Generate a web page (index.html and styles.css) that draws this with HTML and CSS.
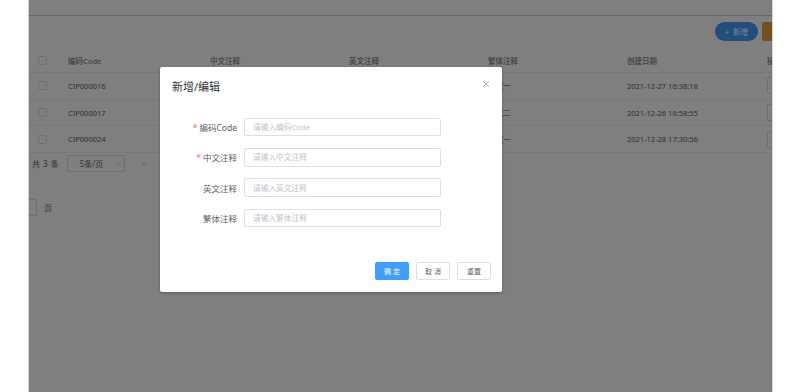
FILE: index.html
```html
<!DOCTYPE html>
<html lang="zh-CN">
<head>
<meta charset="utf-8">
<title>编码管理</title>
<link rel="stylesheet" href="styles.css">
</head>
<body>
<div class="side"></div>
<div class="frame">
  <div class="page">
    <div class="topbar"></div>
    <div class="toolbar">
      <button class="btn-add">+ 新增</button>
      <button class="btn-export">导出</button>
    </div>
    <div class="table">
      <div class="tr th">
        <div class="td c0"><span class="cb"></span></div>
        <div class="td c1">编码Code</div>
        <div class="td c2">中文注释</div>
        <div class="td c2">英文注释</div>
        <div class="td c2">繁体注释</div>
        <div class="td c5">创建日期</div>
        <div class="td c6">操作</div>
      </div>
      <div class="tr">
        <div class="td c0"><span class="cb"></span></div>
        <div class="td c1">CIP000016</div>
        <div class="td c2"></div>
        <div class="td c2"></div>
        <div class="td c2">測試一</div>
        <div class="td c5">2021-12-27 16:38:18</div>
        <div class="td c6"><span class="op">编辑</span></div>
      </div>
      <div class="tr">
        <div class="td c0"><span class="cb"></span></div>
        <div class="td c1">CIP000017</div>
        <div class="td c2"></div>
        <div class="td c2"></div>
        <div class="td c2">測試二</div>
        <div class="td c5">2021-12-26 18:58:55</div>
        <div class="td c6"><span class="op">编辑</span></div>
      </div>
      <div class="tr">
        <div class="td c0"><span class="cb"></span></div>
        <div class="td c1">CIP000024</div>
        <div class="td c2"></div>
        <div class="td c2"></div>
        <div class="td c2">測試一</div>
        <div class="td c5">2021-12-28 17:30:56</div>
        <div class="td c6"><span class="op">编辑</span></div>
      </div>
    </div>
    <div class="pager">
      <span class="total">共 3 条</span>
      <span class="sizes"><span class="sizes-text">5条/页</span><svg class="chev" viewBox="0 0 8 5" width="7" height="4"><path d="M1 1l3 3 3-3" fill="none" stroke="#c0c4cc" stroke-width="0.9"/></svg></span>
      <span class="prev">&lt;</span>
    </div>
    <div class="jump">
      <span class="jump-box"></span>
      <span class="jump-text">页</span>
    </div>
  </div>

  <div class="mask">
    <div class="dialog">
      <div class="dlg-head">
        <span class="dlg-title">新增/编辑</span>
        <svg class="close" viewBox="0 0 6 6" width="6" height="6"><path d="M0.3 0.3L5.7 5.7M5.7 0.3L0.3 5.7" stroke="#909399" stroke-width="0.8" fill="none"/></svg>
      </div>
      <div class="dlg-body">
        <div class="item">
          <label class="lbl"><span class="req">*</span>编码Code</label>
          <input class="inp" placeholder="请输入编码Code">
        </div>
        <div class="item">
          <label class="lbl"><span class="req">*</span>中文注释</label>
          <input class="inp" placeholder="请输入中文注释">
        </div>
        <div class="item">
          <label class="lbl">英文注释</label>
          <input class="inp" placeholder="请输入英文注释">
        </div>
        <div class="item">
          <label class="lbl">繁体注释</label>
          <input class="inp" placeholder="请输入繁体注释">
        </div>
      </div>
      <div class="dlg-foot">
        <button class="fbtn primary">确 定</button>
        <button class="fbtn">取 消</button>
        <button class="fbtn">重置</button>
      </div>
    </div>
  </div>
</div>
<div class="side"></div>
</body>
</html>
```

FILE: styles.css
```css
* { box-sizing: border-box; }
html, body { margin: 0; padding: 0; }
body {
  width: 800px;
  height: 392px;
  display: flex;
  background: #fff;
  font-family: "Noto Sans", "Noto Sans CJK SC", sans-serif;
  overflow: hidden;
}
.side { width: 28px; flex: none; background: #fff; }
.frame {
  position: relative;
  width: 745px;
  flex: none;
  height: 392px;
  border-left: 1px solid #d4d4d4;
  border-right: 1px solid #d4d4d4;
  overflow: hidden;
  background: #fff;
}
.page { width: 860px; }
.topbar { height: 16px; border-bottom: 1px solid #c8c8c8; background: #fff; }
.toolbar {
  display: flex;
  gap: 4px;
  padding: 6px 0 0 686px;
}
.toolbar button {
  height: 19px;
  border: none;
  font-family: inherit;
  font-size: 7.5px;
  color: #fff;
  padding: 0;
  word-spacing: 2px;
}
.btn-add { width: 43px; border-radius: 10px; background: #409eff; }
.btn-export { width: 60px; border-radius: 2px; background: #e6a23c; }
.table { margin-top: 7px; font-size: 7.5px; color: #5a5c60; }
.tr {
  display: flex;
  align-items: center;
  height: 26.7px;
  border-bottom: 1px solid #ebeef5;
}
.th { height: 25px; color: #909399; font-weight: 600; }
.td { padding-left: 8px; white-space: nowrap; flex: none; }
.c0 { width: 31px; padding-left: 9px; display: flex; align-items: center; }
.c1 { width: 142px; }
.c2 { width: 139px; }
.c5 { width: 140px; }
.c6 { width: 100px; }
.cb {
  width: 9px; height: 9px;
  border: 1px solid #dcdfe6;
  border-radius: 2px;
  background: #fff;
}
.op {
  display: inline-block;
  height: 17px;
  line-height: 15px;
  padding: 0 8px;
  border: 1px solid #dcdfe6;
  border-radius: 2px;
  background: #fff;
}
.pager {
  display: flex;
  align-items: center;
  height: 18px;
  margin-top: 1px;
  padding-left: 3px;
  font-size: 8px;
  color: #606266;
  white-space: nowrap;
}
.total { word-spacing: 1px; }
.sizes {
  margin-left: 8px;
  width: 58px;
  height: 17px;
  border: 1px solid #dcdfe6;
  border-radius: 2px;
  display: flex;
  align-items: center;
  padding-left: 12px;
  gap: 12px;
}
.sizes-text { white-space: nowrap; flex: none; }
.chev { flex: none; }
.prev { margin-left: 17px; color: #c0c4cc; }
.jump {
  display: flex;
  align-items: center;
  margin-top: 27px;
  height: 17px;
  font-size: 8px;
  color: #606266;
}
.jump-box {
  width: 8px; height: 17px;
  border: 1px solid #dcdfe6;
  border-left: none;
  border-radius: 0 2px 2px 0;
}
.jump-text { margin-left: 7px; }

.mask {
  position: absolute;
  inset: 0;
  background: rgba(0, 0, 0, 0.5);
  display: flex;
  align-items: flex-start;
}
.dialog {
  margin: 67px 0 0 131px;
  width: 342px;
  height: 225px;
  background: #fff;
  border-radius: 2px;
  box-shadow: 0 1px 3px rgba(0,0,0,.3);
  display: flex;
  flex-direction: column;
}
.dlg-head {
  display: flex;
  justify-content: space-between;
  align-items: flex-start;
  padding: 12px 13.5px 0 12px;
}
.dlg-title {
  font-size: 11px;
  line-height: 15px;
  color: #303133;
}
.close { margin-top: 1.5px; }
.dlg-body {
  padding-top: 23.7px;
  display: flex;
  flex-direction: column;
  gap: 11.7px;
}
.item {
  display: flex;
  align-items: center;
  gap: 6.5px;
  height: 18.6px;
}
.lbl {
  width: 77px;
  text-align: right;
  font-size: 8.5px;
  color: #606266;
}
.req { color: #f56c6c; margin-right: 2px; }
.inp {
  width: 197.5px;
  height: 18.6px;
  border: 1px solid #dcdfe6;
  border-radius: 2px;
  padding: 0 0 0 8.5px;
  font-family: inherit;
  font-size: 7.7px;
  color: #606266;
  outline: none;
}
.inp::placeholder { color: #c0c4cc; }
.dlg-foot {
  margin-top: auto;
  display: flex;
  justify-content: flex-end;
  gap: 7px;
  padding: 0 11px 12px 0;
}
.fbtn {
  width: 34px;
  height: 18px;
  padding: 0;
  border: 1px solid #dcdfe6;
  border-radius: 2px;
  background: #fff;
  color: #606266;
  font-family: inherit;
  font-size: 7px;
}
.fbtn.primary { background: #409eff; border-color: #409eff; color: #fff; }
```
